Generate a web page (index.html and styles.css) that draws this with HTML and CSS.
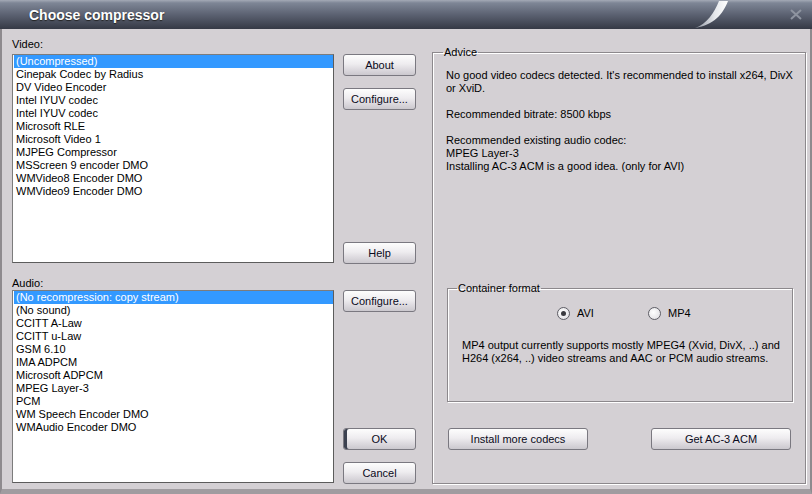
FILE: index.html
```html
<!DOCTYPE html>
<html lang="en">
<head>
  <meta charset="UTF-8" />
  <title>Choose compressor</title>
  <link rel="stylesheet" href="styles.css">
</head>
<body>

  <div class="window">
    <div class="titlebar">
      <span class="title">Choose compressor</span>
      <svg class="swoosh" width="40" height="29" viewBox="0 0 40 29">
        <defs>
          <linearGradient id="sw" x1="0" y1="0" x2="1" y2="0">
            <stop offset="0" stop-color="#8c929e"/>
            <stop offset="0.6" stop-color="#e6e8ec"/>
            <stop offset="1" stop-color="#ffffff"/>
          </linearGradient>
        </defs>
        <path d="M5,28 C17,24 24,13 29,1 L38,1 C33,14 24,25 5,28 Z" fill="url(#sw)"/>
      </svg>
      <svg class="close" width="16" height="16" viewBox="0 0 16 16">
        <path d="M3,3 L13,12 M13,3 L3,12" stroke="#8e94a0" stroke-width="2" fill="none"/>
      </svg>
    </div>

    <div class="content">
      <div class="lists">
        <div class="label">Video:</div>
        <ul class="listbox video">
          <li class="sel">(Uncompressed)</li>
          <li>Cinepak Codec by Radius</li>
          <li>DV Video Encoder</li>
          <li>Intel IYUV codec</li>
          <li>Intel IYUV codec</li>
          <li>Microsoft RLE</li>
          <li>Microsoft Video 1</li>
          <li>MJPEG Compressor</li>
          <li>MSScreen 9 encoder DMO</li>
          <li>WMVideo8 Encoder DMO</li>
          <li>WMVideo9 Encoder DMO</li>
        </ul>
        <div class="label audio-label">Audio:</div>
        <ul class="listbox audio">
          <li class="sel">(No recompression: copy stream)</li>
          <li>(No sound)</li>
          <li>CCITT A-Law</li>
          <li>CCITT u-Law</li>
          <li>GSM 6.10</li>
          <li>IMA ADPCM</li>
          <li>Microsoft ADPCM</li>
          <li>MPEG Layer-3</li>
          <li>PCM</li>
          <li>WM Speech Encoder DMO</li>
          <li>WMAudio Encoder DMO</li>
        </ul>
      </div>

      <div class="side-buttons">
        <button class="btn">About</button>
        <button class="btn b-config">Configure...</button>
        <button class="btn b-help">Help</button>
        <button class="btn b-config2">Configure...</button>
        <button class="btn b-ok">OK</button>
        <button class="btn b-cancel">Cancel</button>
      </div>

      <fieldset class="group advice">
        <legend>Advice</legend>
        <p>No good video codecs detected. It's recommended to install x264, DivX<br>or XviD.</p>
        <p>Recommended bitrate: 8500 kbps</p>
        <p>Recommended existing audio codec:<br>MPEG Layer-3<br>Installing AC-3 ACM is a good idea. (only for AVI)</p>

        <fieldset class="group container">
          <legend>Container format</legend>
          <div class="radios">
            <span class="radio-item"><span class="radio on"></span>AVI</span>
            <span class="radio-item"><span class="radio"></span>MP4</span>
          </div>
          <p class="note">MP4 output currently supports mostly MPEG4 (Xvid, DivX, ..) and<br>H264 (x264, ..) video streams and AAC or PCM audio streams.</p>
        </fieldset>

        <div class="bottom-buttons">
          <button class="btn wide">Install more codecs</button>
          <button class="btn wide">Get AC-3 ACM</button>
        </div>
      </fieldset>
    </div>
  </div>

</body>
</html>
```

FILE: styles.css
```css
* {
  box-sizing: border-box;
}
body {
  margin: 0;
  background: #d4d0d4;
  font-family: "Liberation Sans", Arial, sans-serif;
  font-size: 11px;
  color: #000;
}
.window {
  width: 812px;
  height: 494px;
  display: flex;
  flex-direction: column;
}

/* title bar */
.titlebar {
  height: 29px;
  display: flex;
  align-items: center;
  padding: 0 8px 0 29px;
  background: linear-gradient(#a4aab6 0, #7e8696 10%, #5c6272 50%, #353945 100%);
}
.title {
  color: #fff;
  font-weight: bold;
  font-size: 14px;
  text-shadow: 0 1px 1px #222;
}
.swoosh {
  margin-left: auto;
  margin-right: 58px;
  align-self: flex-end;
}
.close {
  display: block;
}

/* body */
.content {
  flex: 1;
  display: flex;
  align-items: flex-start;
  padding: 9px 0 0 10px;
  background: #d4d0d4;
  border-left: 2px solid #8e8a8e;
  border-right: 2px solid #8e8a8e;
  border-bottom: 5px solid #a09ca0;
}
.lists {
  width: 322px;
}
.label {
  height: 13px;
  line-height: 13px;
  margin-bottom: 3px;
}
.audio-label {
  margin-top: 14px;
  margin-bottom: 0;
}
.listbox {
  list-style: none;
  margin: 0;
  padding: 0;
  background: #fff;
  border: 1px solid;
  border-color: #7c7c7c #5c5c5c #5c5c5c #7c7c7c;
}
.listbox.video {
  height: 209px;
}
.listbox.audio {
  height: 193px;
}
.listbox li {
  height: 13px;
  line-height: 13px;
  padding-left: 3px;
  white-space: nowrap;
}
.listbox li.sel {
  background: #3399ff;
  color: #fff;
  margin-left: 1px;
  padding-left: 2px;
}

/* buttons */
.btn {
  display: block;
  height: 22px;
  padding: 0;
  font-family: inherit;
  font-size: 11px;
  color: #0a0a20;
  border: 1px solid #7a7880;
  border-radius: 3px;
  background: linear-gradient(#fdfdfd 0, #eeecef 45%, #dedbe0 70%, #cbc8ce 100%);
}
.side-buttons {
  width: 73px;
  margin-left: 9px;
  padding-top: 16px;
}
.side-buttons .btn {
  width: 73px;
}
.b-config { margin-top: 12px; }
.b-help { margin-top: 132px; }
.b-config2 { margin-top: 26px; }
.b-ok {
  margin-top: 116px;
  box-shadow: inset 3px 0 0 #3c4150;
}
.b-cancel { margin-top: 12px; }

/* group boxes */
.group {
  margin: 0;
  border: 1px solid #8c888c;
  box-shadow: inset 1px 1px 0 #fff, 1px 1px 0 #fff;
}
.group legend {
  padding: 0 1px;
  line-height: 13px;
}
.advice {
  width: 369px;
  height: 438px;
  margin: 8px 0 0 16px;
  padding: 10px 12px 0 13px;
}
.advice legend {
  margin-left: -3px;
}
.advice p {
  margin: 0 0 13px;
  line-height: 13px;
}
.container {
  width: 346px;
  height: 120px;
  margin: 109px 0 0 1px;
  padding: 0 10px 0 14px;
}
.container legend {
  margin-left: -5px;
}
.radios {
  display: flex;
  margin-top: 12px;
  padding-left: 95px;
  height: 13px;
  line-height: 13px;
}
.radio-item {
  display: flex;
  align-items: center;
  width: 91px;
}
.radio {
  width: 13px;
  height: 13px;
  margin-right: 7px;
  border: 1px solid #5e5e66;
  border-radius: 50%;
  background: radial-gradient(circle at 40% 40%, #fff, #dcdadf);
  display: flex;
  align-items: center;
  justify-content: center;
}
.radio.on::after {
  content: "";
  width: 5px;
  height: 5px;
  border-radius: 50%;
  background: #3a3a40;
}
.advice .note {
  margin: 19px 0 0;
}
.bottom-buttons {
  display: flex;
  justify-content: space-between;
  width: 343px;
  margin: 26px 0 0 2px;
}
.btn.wide {
  width: 140px;
}
```
